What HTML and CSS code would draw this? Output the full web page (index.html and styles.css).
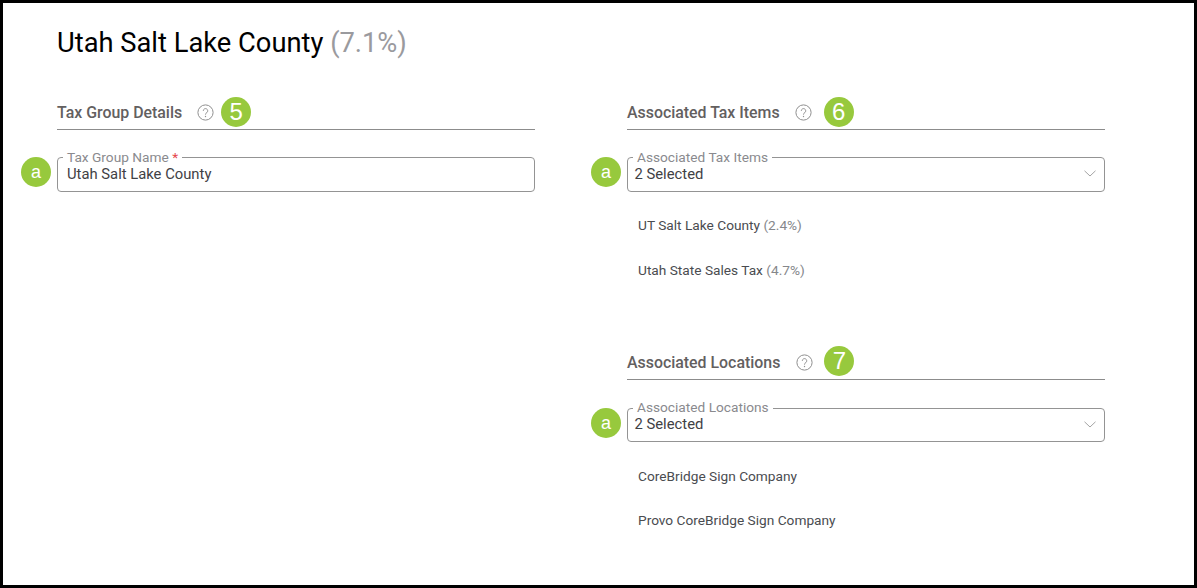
FILE: index.html
```html
<!DOCTYPE html>
<html lang="en">
<head>
<meta charset="utf-8">
<title>Utah Salt Lake County</title>
<link rel="stylesheet" href="styles.css">
</head>
<body>
<svg class="defs" width="0" height="0" aria-hidden="true">
  <symbol id="help" viewBox="0 0 17 17">
    <circle cx="8.5" cy="8.5" r="7.6" fill="none" stroke="currentColor" stroke-width="1"/>
    <path d="M6.3 6.8a2.2 2.2 0 1 1 3.5 1.8c-.8.6-1.3 1-1.3 2" fill="none" stroke="currentColor" stroke-width="1"/>
    <circle cx="8.5" cy="12.5" r=".7" fill="currentColor"/>
  </symbol>
  <symbol id="chev" viewBox="0 0 12 7">
    <path d="M.5.8 6 6 11.5.8" fill="none" stroke="currentColor" stroke-width="1"/>
  </symbol>
</svg>
<main class="frame">
  <h1 class="title">Utah Salt Lake County <span class="muted">(7.1%)</span></h1>
  <div class="columns">
    <section class="col">
      <header class="sec-head">
        <h2 class="sec-title">Tax Group Details</h2>
        <svg class="help help-a"><use href="#help"/></svg>
        <span class="badge badge-num badge-5">5</span>
      </header>
      <div class="field">
        <span class="badge badge-a">a</span>
        <span class="legend">Tax Group Name <em class="req">*</em></span>
        <div class="value value-indent">Utah Salt Lake County</div>
      </div>
    </section>
    <section class="col">
      <header class="sec-head">
        <h2 class="sec-title">Associated Tax Items</h2>
        <svg class="help help-b"><use href="#help"/></svg>
        <span class="badge badge-num badge-6">6</span>
      </header>
      <div class="field">
        <span class="badge badge-a">a</span>
        <span class="legend">Associated Tax Items</span>
        <div class="value">2 Selected</div>
        <svg class="chev"><use href="#chev"/></svg>
      </div>
      <ul class="items items-top">
        <li>UT Salt Lake County <span class="pct">(2.4%)</span></li>
        <li>Utah State Sales Tax <span class="pct">(4.7%)</span></li>
      </ul>
      <header class="sec-head">
        <h2 class="sec-title">Associated Locations</h2>
        <svg class="help help-c"><use href="#help"/></svg>
        <span class="badge badge-num badge-7">7</span>
      </header>
      <div class="field field-low">
        <span class="badge badge-a">a</span>
        <span class="legend">Associated Locations</span>
        <div class="value">2 Selected</div>
        <svg class="chev"><use href="#chev"/></svg>
      </div>
      <ul class="items items-low">
        <li>CoreBridge Sign Company</li>
        <li>Provo CoreBridge Sign Company</li>
      </ul>
    </section>
  </div>
</main>
</body>
</html>
```
FILE: styles.css
```css
* { box-sizing: border-box; }
html, body { margin: 0; padding: 0; background: #fff; }
body { font-family: Roboto, "Liberation Sans", sans-serif; overflow: hidden; }
.defs { position: absolute; }
.frame {
  width: 1197px;
  height: 588px;
  border: 3px solid #000;
  padding: 21px 89px 0 54px;
  background: #fff;
}
.title {
  margin: 0;
  font-size: 27.3px;
  line-height: 38px;
  font-weight: 400;
  color: #000;
}
.muted { color: #9a9a9e; }
.columns {
  display: grid;
  grid-template-columns: 478px 478px;
  column-gap: 92px;
  margin-top: 33px;
}
.sec-head {
  display: flex;
  align-items: center;
  height: 35px;
  border-bottom: 1px solid #8c8c8c;
}
.sec-title {
  margin: 0;
  font-size: 15.9px;
  font-weight: 500;
  color: #63605f;
  line-height: 31px;
}
.help { width: 17px; height: 17px; color: #8f8f8f; flex: none; }
.help-a { margin-left: 15px; }
.help-b { margin-left: 15px; }
.help-c { margin-left: 16px; }
.badge {
  display: flex;
  align-items: center;
  justify-content: center;
  width: 30px;
  height: 30px;
  border-radius: 50%;
  background: #97c93d;
  color: #fff;
  flex: none;
}
.badge-num { font-family: "Liberation Sans", Arial, sans-serif; font-size: 24px; }
.badge-5 { margin-left: 7px; }
.badge-6 { margin-left: 12px; }
.badge-7 { margin-left: 11px; margin-top: -2px; }
.badge-a {
  position: absolute;
  left: -37px;
  top: -1px;
  font-family: "Liberation Sans", Arial, sans-serif;
  font-size: 18px;
}
.field {
  position: relative;
  height: 35px;
  margin-top: 27px;
  border: 1px solid #949494;
  border-radius: 4px;
}
.legend {
  position: absolute;
  left: 5px;
  top: -9px;
  padding: 0 4px;
  background: #fff;
  font-size: 13.7px;
  line-height: 16px;
  color: #8a8a8e;
}
.req { font-style: normal; color: #e5484d; }
.value {
  padding: 7px 0 0 6.5px;
  font-size: 14.8px;
  line-height: 18px;
  color: #3f4145;
}
.value-indent { padding-left: 9px; }
.chev {
  position: absolute;
  right: 8px;
  top: 12px;
  width: 12px;
  height: 7px;
  color: #a3a3a3;
}
.items {
  list-style: none;
  margin: 0;
  font-size: 13.7px;
  color: #4a4c50;
}
.items-top { padding: 11px 0 0 11px; height: 153px; }
.items-low { padding: 12px 0 0 11px; }
.items li { height: 45px; line-height: 45px; }
.items-low li { height: 44px; line-height: 44px; }
.pct { color: #85878b; }
.field-low { margin-top: 28px; height: 34px; }
.field-low .legend { top: -10px; }
.field-low .value { padding-top: 6px; }
```
